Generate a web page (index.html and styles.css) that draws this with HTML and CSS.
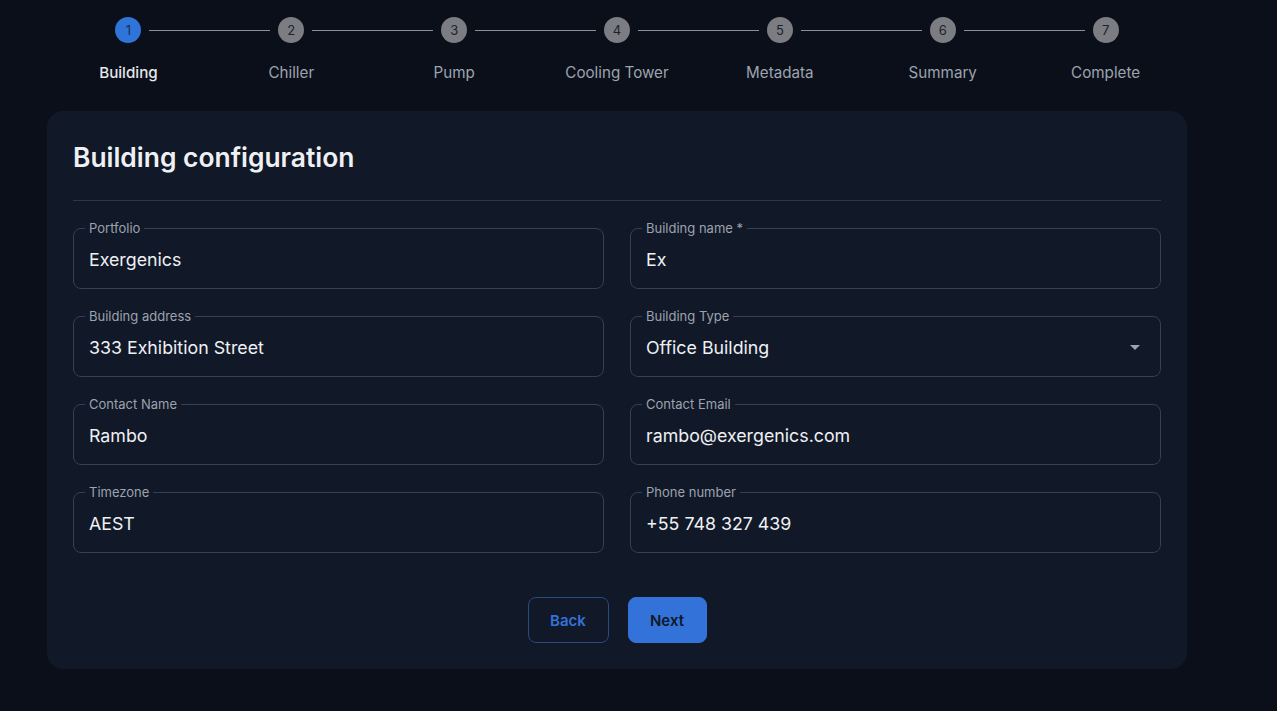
FILE: index.html
```html
<!DOCTYPE html>
<html lang="en">
<head>
<meta charset="utf-8">
<title>Building configuration</title>
<link rel="stylesheet" href="styles.css">
</head>
<body>
<div class="page">
  <div class="stepper">
    <div class="step active"><div class="track"><span class="line hidden"></span><span class="dot">1</span><span class="line"></span></div><div class="label">Building</div></div>
    <div class="step"><div class="track"><span class="line"></span><span class="dot">2</span><span class="line"></span></div><div class="label">Chiller</div></div>
    <div class="step"><div class="track"><span class="line"></span><span class="dot">3</span><span class="line"></span></div><div class="label">Pump</div></div>
    <div class="step"><div class="track"><span class="line"></span><span class="dot">4</span><span class="line"></span></div><div class="label">Cooling Tower</div></div>
    <div class="step"><div class="track"><span class="line"></span><span class="dot">5</span><span class="line"></span></div><div class="label">Metadata</div></div>
    <div class="step"><div class="track"><span class="line"></span><span class="dot">6</span><span class="line"></span></div><div class="label">Summary</div></div>
    <div class="step"><div class="track"><span class="line"></span><span class="dot">7</span><span class="line hidden"></span></div><div class="label">Complete</div></div>
  </div>

  <div class="card">
    <h1 class="title">Building configuration</h1>
    <hr class="divider">
    <div class="grid">
      <fieldset class="field"><legend>Portfolio</legend><div class="value">Exergenics</div></fieldset>
      <fieldset class="field"><legend>Building name *</legend><div class="value">Ex</div></fieldset>
      <fieldset class="field"><legend>Building address</legend><div class="value">333 Exhibition Street</div></fieldset>
      <fieldset class="field"><legend>Building Type</legend><div class="value select"><span>Office Building</span><span class="caret"></span></div></fieldset>
      <fieldset class="field"><legend>Contact Name</legend><div class="value">Rambo</div></fieldset>
      <fieldset class="field"><legend>Contact Email</legend><div class="value">rambo@exergenics.com</div></fieldset>
      <fieldset class="field"><legend>Timezone</legend><div class="value">AEST</div></fieldset>
      <fieldset class="field"><legend>Phone number</legend><div class="value">+55 748 327 439</div></fieldset>
    </div>
    <div class="actions">
      <button class="btn btn-back">Back</button>
      <button class="btn btn-next">Next</button>
    </div>
  </div>
</div>
</body>
</html>
```

FILE: styles.css
```css
* { box-sizing: border-box; }
html, body { margin: 0; padding: 0; }
body {
  background: #0b0f1a;
  font-family: Inter, "Noto Sans", sans-serif;
  color: #e5e7eb;
  min-height: 711px;
}
.page {
  padding-left: 47px;
  width: 1187px;
}
.stepper {
  display: flex;
  padding-top: 17px;
}
.step {
  flex: 1;
  display: flex;
  flex-direction: column;
  align-items: center;
}
.track {
  display: flex;
  align-items: center;
  width: 100%;
}
.line {
  flex: 1;
  height: 1px;
  background: #8d8f94;
}
.line.hidden { visibility: hidden; }
.dot {
  width: 26px;
  height: 26px;
  border-radius: 50%;
  background: #7b7d82;
  color: #1c2230;
  font-size: 13px;
  display: flex;
  align-items: center;
  justify-content: center;
  margin: 0 8px;
  flex: none;
}
.step.active .dot {
  background: #2f74d9;
  color: #16315a;
}
.label {
  margin-top: 20px;
  font-size: 15.2px;
  line-height: 20px;
  color: #9ca3af;
}
.step.active .label { color: #e5e7eb; font-weight: 500; }

.card {
  margin-top: 28px;
  background: #111827;
  border-radius: 16px;
  padding: 30px 26px 26px;
}
.title {
  margin: 0;
  font-size: 26.4px;
  line-height: 32px;
  font-weight: 600;
  color: #eef0f3;
}
.divider {
  margin: 27px 0 20px;
  border: 0;
  height: 1px;
  background: #2f3746;
}
.grid {
  display: grid;
  grid-template-columns: 1fr 1fr;
  column-gap: 26px;
  row-gap: 20px;
}
.field {
  margin: 0;
  border: 1px solid #354052;
  border-radius: 8px;
  padding: 0 15px 5px;
  min-width: 0;
}
.field legend {
  font-size: 13px;
  line-height: 15px;
  color: #9ca3af;
  padding: 0 4px;
  margin-left: -4px;
}
.value {
  height: 47px;
  display: flex;
  align-items: center;
  font-size: 17.8px;
  color: #eef0f3;
}
.select { justify-content: space-between; }
.caret {
  width: 0;
  height: 0;
  border-left: 5px solid transparent;
  border-right: 5px solid transparent;
  border-top: 5px solid #9ca3af;
  margin-right: 5px;
}
.actions {
  display: flex;
  justify-content: center;
  gap: 19px;
  margin-top: 44px;
}
.btn {
  font-family: Inter, "Noto Sans", sans-serif;
  font-size: 15px;
  font-weight: 600;
  height: 46px;
  border-radius: 8px;
  cursor: pointer;
  padding: 0;
}
.btn-back {
  width: 81px;
  background: transparent;
  border: 1px solid #284b80;
  color: #3373d9;
}
.btn-next {
  width: 79px;
  background: #3373d9;
  border: 1px solid #3373d9;
  color: #111827;
}
```
